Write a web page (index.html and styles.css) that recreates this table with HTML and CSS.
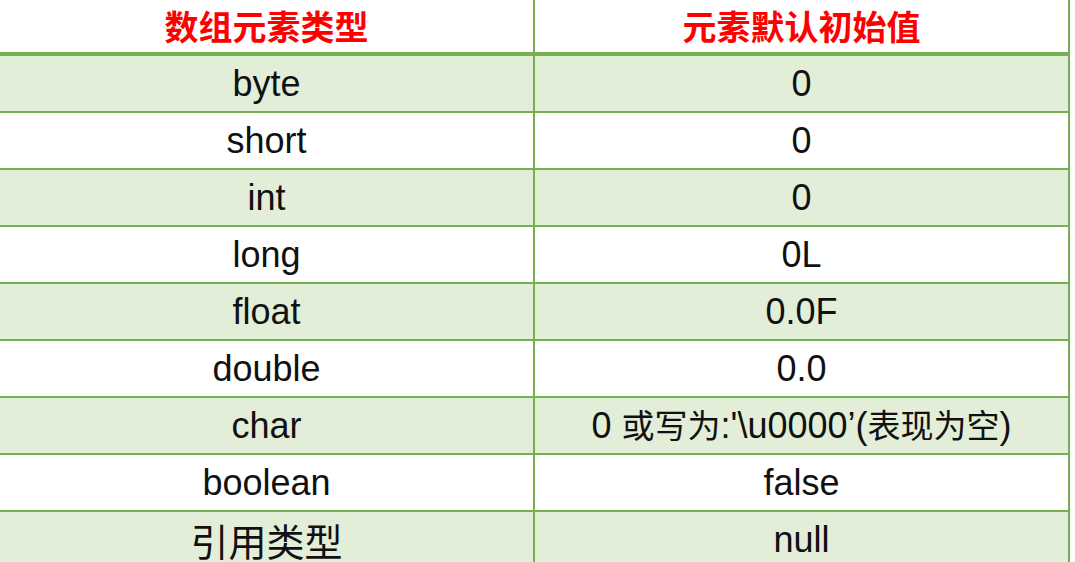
FILE: index.html
```html
<!DOCTYPE html>
<html lang="zh-CN">
<head>
<meta charset="utf-8">
<title>数组元素默认初始值</title>
<link rel="stylesheet" href="styles.css">
</head>
<body>
<div class="table">
  <div class="row head">
    <div class="cell left">数组元素类型</div>
    <div class="cell right">元素默认初始值</div>
  </div>
  <div class="row green">
    <div class="cell left">byte</div>
    <div class="cell right">0</div>
  </div>
  <div class="row">
    <div class="cell left">short</div>
    <div class="cell right">0</div>
  </div>
  <div class="row green">
    <div class="cell left">int</div>
    <div class="cell right">0</div>
  </div>
  <div class="row">
    <div class="cell left">long</div>
    <div class="cell right">0L</div>
  </div>
  <div class="row green">
    <div class="cell left">float</div>
    <div class="cell right">0.0F</div>
  </div>
  <div class="row">
    <div class="cell left">double</div>
    <div class="cell right">0.0</div>
  </div>
  <div class="row green">
    <div class="cell left">char</div>
    <div class="cell right"><span class="mixed">0 <span class="cjk">或写为</span>:'\u0000’(<span class="cjk">表现为空</span>)</span></div>
  </div>
  <div class="row">
    <div class="cell left">boolean</div>
    <div class="cell right">false</div>
  </div>
  <div class="row green">
    <div class="cell left big-cjk">引用类型</div>
    <div class="cell right">null</div>
  </div>
</div>
</body>
</html>
```
FILE: styles.css
```css
html, body {
  margin: 0;
  padding: 0;
  background: #ffffff;
  overflow: hidden;
}

body {
  width: 1075px;
  height: 562px;
  font-family: "Liberation Sans", "Noto Sans CJK SC", sans-serif;
  color: #111111;
}

.table {
  display: flex;
  flex-direction: column;
  width: 1070px;
}

.row {
  display: flex;
  height: 55px;
  border-bottom: 2px solid #74b04f;
  background: #ffffff;
}

.row.green {
  background: #e2eed8;
}

.row.head {
  height: 52px;
  border-bottom: 4px solid #74b04f;
}

.cell {
  display: flex;
  align-items: center;
  justify-content: center;
  font-size: 36px;
  line-height: 1;
  white-space: nowrap;
}

.cell.left {
  width: 533px;
  border-right: 2px solid #74b04f;
}

.cell.right {
  width: 533px;
  border-right: 2px solid #74b04f;
}

.head .cell {
  font-family: "Noto Sans CJK SC", sans-serif;
  font-weight: 700;
  font-size: 34px;
  color: #ff0000;
}

.mixed {
  white-space: pre;
}

.cjk {
  font-family: "Noto Sans CJK SC", sans-serif;
  font-size: 33px;
}

.big-cjk {
  font-family: "Noto Sans CJK SC", sans-serif;
  font-size: 38px;
}
```
